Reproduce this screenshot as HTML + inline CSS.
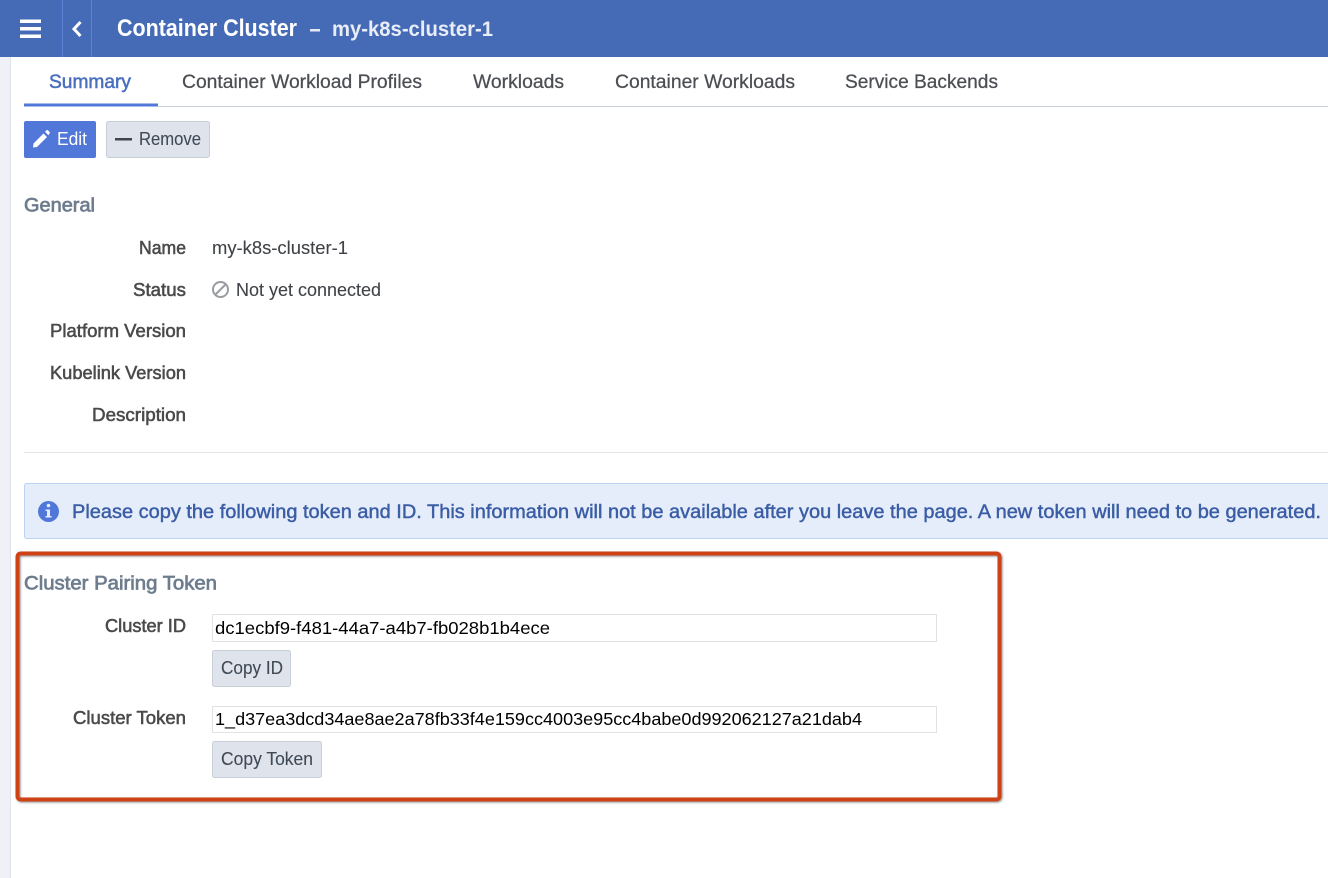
<!DOCTYPE html>
<html>
<head>
<meta charset="utf-8">
<title>Container Cluster</title>
<style>
html,body{margin:0;padding:0;background:#fff;width:1328px;height:878px;overflow:hidden}
svg{display:block;position:absolute;left:0;top:0}
text{font-family:"Liberation Sans",sans-serif;font-size:18.5px;white-space:pre;filter:blur(.2px)}
.lab{fill:#4a4a4a;stroke:#4a4a4a;stroke-width:.55px}
.val{fill:#3f4347;stroke:#3f4347;stroke-width:.1px}
.h{fill:#6e7d8e;stroke:#6e7d8e;stroke-width:.7px;font-size:19px}
.tab{fill:#4b4e52;font-size:19px;stroke:#4b4e52;stroke-width:.25px}
.btn{fill:#3f4a57;stroke:#3f4a57;stroke-width:.1px}
.mono{fill:#000;font-size:17.500px}
</style>
</head>
<body>
<svg width="1328" height="878" viewBox="0 0 1328 878" xmlns="http://www.w3.org/2000/svg">
<defs>
<filter id="sh" x="-5%" y="-5%" width="110%" height="110%"><feDropShadow dx="1" dy="1" stdDeviation="1" flood-color="#000" flood-opacity=".45"/></filter>
</defs>
<rect width="1328" height="878" fill="#fff"/>
<rect x="0" y="57" width="10" height="821" fill="#eff1f6"/>
<rect x="10" y="57" width="1" height="821" fill="#dfe3ea"/>

<!-- header -->
<rect width="1328" height="57" fill="#466bb6"/>
<rect x="62" y="0" width="1" height="57" fill="#5c84d6"/>
<rect x="91" y="0" width="1" height="57" fill="#5c84d6"/>
<g fill="#fff"><rect x="20" y="19.500" width="21" height="3.500"/><rect x="20" y="27" width="21" height="3.500"/><rect x="20" y="34.500" width="21" height="3.500"/></g>
<path d="M80.500 22 L74 29 L80.500 36" fill="none" stroke="#fff" stroke-width="3"/>
<text x="117" y="36" textLength="180" lengthAdjust="spacingAndGlyphs" fill="#fff" font-weight="700" style="font-size:24px">Container Cluster</text>
<rect x="310" y="29" width="10" height="2.500" fill="#e4e9f5"/>
<text x="332" y="36" textLength="161" lengthAdjust="spacingAndGlyphs" fill="#e9edf7" font-weight="700" style="font-size:21px">my-k8s-cluster-1</text>

<!-- tabs -->
<rect x="158" y="106" width="1170" height="1" fill="#c8cfda"/>
<rect x="24" y="103.500" width="134" height="3" fill="#5178d8"/>
<text x="49" y="88" class="tab" textLength="82" lengthAdjust="spacingAndGlyphs" style="fill:#4a6fbf;stroke:#4a6fbf;stroke-width:.5px">Summary</text>
<text x="182" y="88" class="tab" textLength="240" lengthAdjust="spacingAndGlyphs">Container Workload Profiles</text>
<text x="473" y="88" class="tab" textLength="91" lengthAdjust="spacingAndGlyphs">Workloads</text>
<text x="615" y="88" class="tab" textLength="180" lengthAdjust="spacingAndGlyphs">Container Workloads</text>
<text x="845" y="88" class="tab" textLength="153" lengthAdjust="spacingAndGlyphs">Service Backends</text>

<!-- buttons -->
<rect x="24" y="121" width="72" height="37" rx="2" fill="#5178d8"/>
<path d="M33 147.500 L33.500 143.500 L43.500 133.500 L47 137 L37 147 Z M45 131.800 L46.500 130.300 Q47.200 129.800 47.900 130.300 L49.600 132 Q50.100 132.700 49.600 133.400 L48.400 135.200 Z" fill="#fff"/>
<text x="57" y="145" fill="#fff" textLength="30" lengthAdjust="spacingAndGlyphs">Edit</text>
<rect x="106.500" y="121.500" width="103" height="36" rx="2" fill="#dfe3eb" stroke="#c8cfd9"/>
<rect x="115" y="138" width="17" height="2.500" fill="#3c4650"/>
<text x="139" y="145" class="btn" textLength="62" lengthAdjust="spacingAndGlyphs">Remove</text>

<!-- general -->
<text x="24" y="211.500" class="h" textLength="71" lengthAdjust="spacingAndGlyphs">General</text>
<text x="139" y="254" class="lab" textLength="47" lengthAdjust="spacingAndGlyphs">Name</text>
<text x="133" y="296" class="lab" textLength="53" lengthAdjust="spacingAndGlyphs">Status</text>
<text x="50" y="337" class="lab" textLength="136" lengthAdjust="spacingAndGlyphs">Platform Version</text>
<text x="50" y="379" class="lab" textLength="136" lengthAdjust="spacingAndGlyphs">Kubelink Version</text>
<text x="92" y="421" class="lab" textLength="94" lengthAdjust="spacingAndGlyphs">Description</text>
<text x="212" y="254" class="val" textLength="136" lengthAdjust="spacingAndGlyphs">my-k8s-cluster-1</text>
<circle cx="220.500" cy="289.500" r="7.500" fill="none" stroke="#9a9ca3" stroke-width="2"/>
<path d="M215.500 294.500 L225.500 284.500" stroke="#9a9ca3" stroke-width="2"/>
<text x="236" y="296" class="val" textLength="145" lengthAdjust="spacingAndGlyphs">Not yet connected</text>
<rect x="24" y="452" width="1304" height="1" fill="#e2e5ea"/>

<!-- info -->
<rect x="24.500" y="483.500" width="1310" height="55" rx="2" fill="#e5edfb" stroke="#bdd3f3"/>
<circle cx="48.500" cy="511.500" r="10.500" fill="#5178d8"/>
<rect x="47" y="509.500" width="3" height="8" fill="#e5edfb"/>
<rect x="45.500" y="509.500" width="3" height="1.500" fill="#e5edfb"/>
<rect x="45.500" y="516" width="6" height="1.500" fill="#e5edfb"/>
<circle cx="48.500" cy="505.500" r="1.800" fill="#e5edfb"/>
<text x="72" y="518" textLength="1249" lengthAdjust="spacingAndGlyphs" fill="#3a5da5" stroke="#3a5da5" stroke-width=".45" style="font-size:19.500px">Please copy the following token and ID. This information will not be available after you leave the page. A new token will need to be generated.</text>

<!-- red box -->
<rect x="17.500" y="553.500" width="982" height="246" rx="3" fill="none" stroke="#cf4313" stroke-width="4" filter="url(#sh)"/>
<text x="24" y="589.500" class="h" textLength="193" lengthAdjust="spacingAndGlyphs">Cluster Pairing Token</text>
<text x="105" y="632" class="lab" textLength="81" lengthAdjust="spacingAndGlyphs">Cluster ID</text>
<rect x="212.500" y="614.500" width="724" height="27" fill="#fff" stroke="#e2e2e2"/>
<text x="215" y="634" class="mono" textLength="335" lengthAdjust="spacingAndGlyphs">dc1ecbf9-f481-44a7-a4b7-fb028b1b4ece</text>
<rect x="212.500" y="650.500" width="78" height="36" rx="2" fill="#dfe3eb" stroke="#c8cfd9"/>
<text x="221" y="674" class="btn" textLength="62" lengthAdjust="spacingAndGlyphs">Copy ID</text>
<text x="73" y="724" class="lab" textLength="113" lengthAdjust="spacingAndGlyphs">Cluster Token</text>
<rect x="212.500" y="706.500" width="724" height="26" fill="#fff" stroke="#e2e2e2"/>
<text x="215" y="725" class="mono" textLength="647" lengthAdjust="spacingAndGlyphs">1_d37ea3dcd34ae8ae2a78fb33f4e159cc4003e95cc4babe0d992062127a21dab4</text>
<rect x="212.500" y="741.500" width="109" height="36" rx="2" fill="#dfe3eb" stroke="#c8cfd9"/>
<text x="221" y="765" class="btn" textLength="92" lengthAdjust="spacingAndGlyphs">Copy Token</text>
</svg>
</body>
</html>
